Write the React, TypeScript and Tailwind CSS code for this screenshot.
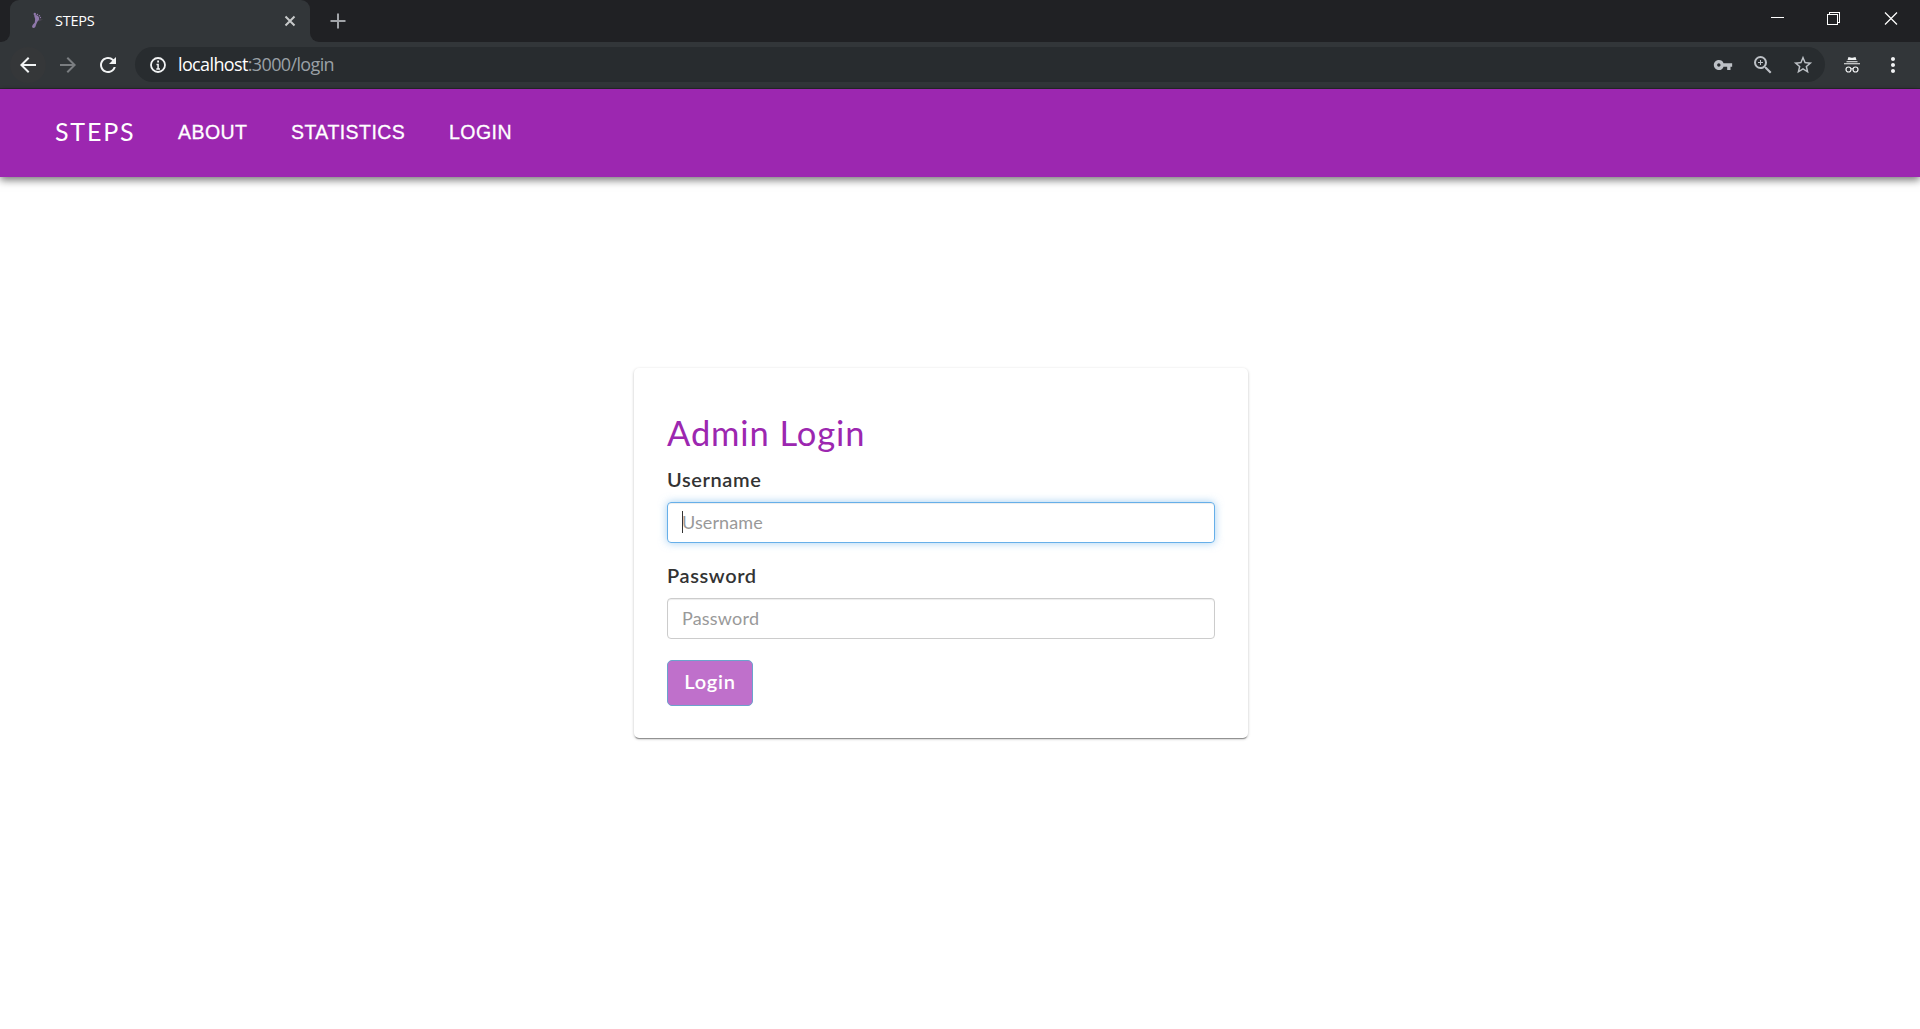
import { MdArrowBack, MdArrowForward, MdRefresh, MdZoomIn, MdStarBorder, MdMoreVert, MdVpnKey } from 'react-icons/md';

function BrowserChrome() {
  return (
    <header className="font-['Open_Sans',sans-serif]">
      <div className="flex h-[42px] bg-[#202124]">
        <div className="flex w-[10px] items-end bg-[#323639]">
          <div className="h-[42px] w-[10px] rounded-br-[9px] bg-[#202124]" />
        </div>
        <div className="flex w-[300px] items-center rounded-t-[9px] bg-[#323639] pl-[18px] pr-[14px] text-white">
          <svg width="20" height="20" viewBox="0 0 20 20" fill="#8f78aa">
            <path d="M6 4.200Q8.500 3.500 10.500 5.500Q12.300 8.500 9.500 10.500Q8.200 13 7.300 16Q5.500 18 4 16Q4 14 6.800 11.500Q7.700 7.500 6 4.200Z" />
            <circle cx="6.800" cy="2.900" r="1.200" /><circle cx="9.400" cy="3.500" r=".8" /><circle cx="11.400" cy="4.800" r=".8" /><circle cx="12.400" cy="6.500" r=".7" />
            <path d="M11 8l4 .5-4 2z" fill="#494552" />
          </svg>
          <span className="ml-[7px] text-[14.500px] leading-5 tracking-[-0.25px]">STEPS</span>
          <svg className="ml-auto" width="12" height="12" viewBox="0 0 12 12" stroke="#c7c9ca" strokeWidth="2"><path d="M1.500 1.500l9 9m0-9l-9 9" /></svg>
        </div>
        <div className="w-[10px] bg-[#323639]"><div className="h-[42px] rounded-bl-[9px] bg-[#202124]" /></div>
        <svg className="ml-[10px] mt-[13px]" width="16" height="16" viewBox="0 0 16 16" stroke="#a1a4a8" strokeWidth="2"><path d="M8 .5v15M.5 8h15" /></svg>
        <svg className="ml-auto mr-[1px] mt-[11px]" width="148" height="16" viewBox="0 0 148 16" fill="none" stroke="#fff" shapeRendering="crispEdges">
          <path d="M0 6.500h13M56.500 3.500h10v10h-10zM58.500 3.500v-2h10v10h-2" />
          <path d="M114 1.500l12 12m0-12l-12 12" shapeRendering="auto" strokeWidth="1.200" />
        </svg>
      </div>
      <div className="flex h-[47px] items-center border-b border-[#27292b] bg-[#323639] pb-px text-[#f1f3f4]">
        <div className="ml-[10px] flex size-9 items-center justify-center rounded-full bg-[#353739]"><MdArrowBack size={24} /></div>
        <MdArrowForward className="ml-[10px] text-[#7b7e81]" size={24} />
        <MdRefresh className="ml-4" size={24} />
        <div className="ml-[15px] flex h-[35px] w-[1690px] items-center rounded-full bg-[#282c2f] pl-[15px] pr-[11px] text-[#bdc1c6]">
          <svg width="16" height="16" viewBox="0 0 16 16" fill="none" stroke="#f1f3f4" strokeWidth="1.800">
            <circle cx="8" cy="8" r="7" /><path d="M6.500 7.500h1.600V12M6.300 12h3.700" strokeWidth="1.500" /><path d="M7.200 4.500h1.800" />
          </svg>
          <span className="-mt-[2px] ml-[12px] text-[18px] leading-6 tracking-[-0.63px] text-[#9aa0a6]"><span className="text-white">localhost</span>:3000/login</span>
          <MdVpnKey className="ml-auto" size={20} />
          <MdZoomIn className="ml-[18px]" size={24} />
          <MdStarBorder className="ml-[17px]" size={22} />
        </div>
        <svg className="ml-[18px]" width="18" height="18" viewBox="0 0 18 18" fill="#f1f3f4">
          <path d="M5.500 1l3 .7h1l3-.7L13.500 4h-9zM3.500 5.200h11v1h-11zM1 7.200h16v1H1z" />
          <path d="M8 13q1-.8 2 0" fill="none" stroke="#f1f3f4" /><circle cx="5.500" cy="13.500" r="2.500" fill="none" stroke="#f1f3f4" strokeWidth="1.200" /><circle cx="12.500" cy="13.500" r="2.500" fill="none" stroke="#f1f3f4" strokeWidth="1.200" />
        </svg>
        <MdMoreVert className="ml-5" size={24} />
      </div>
    </header>
  );
}

function Field({ label, focused = false }: { label: string; focused?: boolean }) {
  return (
    <div className="mb-[18px]">
      <label className="block h-[37px] text-[20px] font-semibold leading-[28px] tracking-[0.6px] text-[#333]">{label}</label>
      <div className={`flex h-[41px] items-center rounded-[4px] border pb-px pl-[14px] text-[18px] text-[#999] ${focused ? 'border-[#66afe9] tracking-[0.1px] shadow-[inset_0_1px_1px_rgba(0,0,0,0.075),0_0_9px_rgba(102,175,233,0.6)]' : 'border-[#ccc] tracking-[0.2px] shadow-[inset_0_1px_1px_rgba(0,0,0,0.075)]'}`}>
        {focused && <span className="-mr-px h-[22px] w-px bg-[#333]" />}
        {label}
      </div>
    </div>
  );
}

export default function App() {
  return (
    <div className="flex h-[1029px] w-full flex-col overflow-hidden bg-white">
      <BrowserChrome />
      <nav className="flex h-[88px] shrink-0 items-center bg-[#9c27b0] pl-[55px] text-white shadow-[0_3px_8px_rgba(0,0,0,0.55)]">
        <span className="-mt-[3px] w-[123px] font-['Lato',sans-serif] text-[25px] tracking-[1.800px]">STEPS</span>
        <div className="flex font-['Liberation_Sans',sans-serif] text-[19.500px] tracking-[0.45px] [-webkit-text-stroke:0.3px_white]">
          <span className="w-[113px]">ABOUT</span>
          <span className="w-[158px]">STATISTICS</span>
          <span>LOGIN</span>
        </div>
      </nav>
      <main className="flex pl-[634px] pt-[191px] font-['Lato',sans-serif]">
        <form className="h-[370px] w-[614px] rounded-[5px] bg-white px-[33px] pt-[43px] shadow-[0_1px_3px_rgba(0,0,0,0.25),0_2px_1px_-1px_rgba(0,0,0,0.35)]">
          <h1 className="h-[54px] text-[34.500px] leading-[44px] tracking-[0.9px] text-[#9c27b0]">Admin Login</h1>
          <Field label="Username" focused />
          <Field label="Password" />
          <button type="button" className="mt-[3px] h-[46px] w-[86px] rounded-[5px] border border-[#6ca3cd] bg-[#bf70cb] pb-[5px] text-[20px] font-semibold tracking-[0.8px] text-white">Login</button>
        </form>
      </main>
    </div>
  );
}
